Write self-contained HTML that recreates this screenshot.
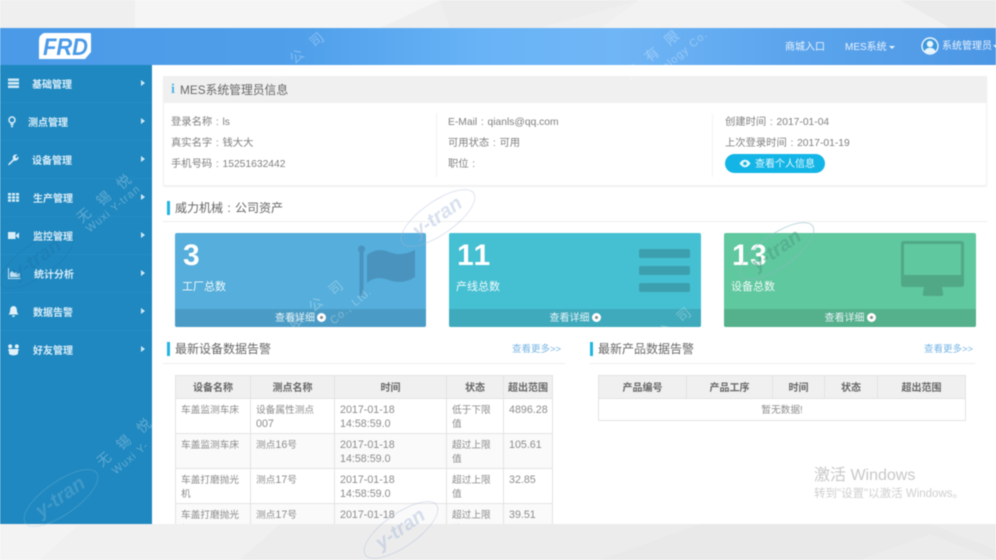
<!DOCTYPE html>
<html lang="zh">
<head>
<meta charset="utf-8">
<title>MES</title>
<style>
*{box-sizing:border-box;margin:0;padding:0}
html,body{width:996px;height:560px;overflow:hidden;background:#fff}
body{position:relative;font-family:"Liberation Sans","Noto Sans CJK SC",sans-serif;color:#777}
#wrap{position:absolute;left:0;top:0;width:996px;height:560px;overflow:hidden;filter:blur(.45px)}
.a{position:absolute;white-space:nowrap}
.nav{position:absolute;left:0;width:152px;height:38px;border-bottom:1px solid #258dc5}
.nav b{position:absolute;top:14px;font-weight:bold;font-size:10px;line-height:14px;color:#d9edf8}
.nav i{position:absolute;left:141px;top:15px;width:0;height:0;border-left:4px solid #cfe8f6;border-top:3.5px solid transparent;border-bottom:3.5px solid transparent}
.nav svg{position:absolute;left:7px;top:12px}
.t{font-size:10.3px;line-height:14px;color:#808080}
.c{display:inline-block;width:1em;text-align:center}
.bar{position:absolute;width:3px;height:14px;background:#1fb5e0}
.line{position:absolute;height:1px;background:#eceeef}
.sec{position:absolute;font-size:12px;line-height:16px;color:#666}
.more{position:absolute;font-size:9.5px;line-height:14px;color:#74b4e4}
.card{position:absolute;top:233px;height:94px;border-radius:2px;overflow:hidden}
.card .n{position:absolute;left:8px;top:3px;font-size:30px;line-height:40px;font-weight:bold;color:#fff;letter-spacing:1.5px}
.card .l{position:absolute;left:7px;top:47px;font-size:11px;line-height:14px;color:#f2fafc}
.card .f{position:absolute;left:0;right:0;bottom:0;height:18px;text-align:center;font-size:10px;line-height:20px;color:#e8f4f8}
.dot{display:inline-block;width:9px;height:9px;border-radius:50%;background:#fff;vertical-align:-1px;margin-left:2px;position:relative}
.dot:after{content:"";position:absolute;left:3px;top:3px;width:3px;height:3px;background:#888;border-radius:50%}
table{position:absolute;border-collapse:collapse;table-layout:fixed;font-size:9.7px;line-height:13.5px;color:#8c8c8c}
td,th{border:1px solid #e3e3e3;padding:5px 5px 0;vertical-align:top;text-align:left;font-weight:normal;overflow:hidden;white-space:nowrap}
th{background:#f0f0f0;color:#666;font-weight:bold;font-size:10px;text-align:center;padding:6px 3px 0;height:23px}
.d{font-size:10.7px}
.wm{position:absolute;white-space:nowrap;color:#fff;transform:rotate(-40deg);transform-origin:left top;opacity:.22}
.cn{font-size:14px;letter-spacing:12px}
.en{font-size:11px;letter-spacing:1px}
.oval{position:absolute;width:88px;height:34px;border:1px solid #a8b8d8;border-radius:50%;transform:rotate(-35deg);opacity:.4;text-align:center;font-style:italic;font-weight:bold;font-size:20px;line-height:30px;color:#9fb4d6}
</style>
</head>
<body>
<div id="wrap">

<svg class="a" style="left:0;top:0" width="996" height="28" viewBox="0 0 996 28">
<rect width="996" height="28" fill="#efefef"/>
<polygon points="135,0 440,0 380,28 135,28" fill="#f5f5f5"/>
<polygon points="440,0 640,0 540,28 450,28" fill="#ececec"/>
<polygon points="640,0 900,0 950,28 600,28" fill="#f2f2f2"/>
<polygon points="900,0 996,0 996,28 950,28" fill="#ebebeb"/>
</svg>
<svg class="a" style="left:0;top:524px" width="996" height="36" viewBox="0 0 996 36">
<rect width="996" height="36" fill="#ececec"/>
<polygon points="0,0 80,0 40,36 0,36" fill="#f3f3f3"/>
<polygon points="80,0 280,0 240,36 40,36" fill="#f0f0f0"/>
<polygon points="600,36 700,0 930,0 996,26 996,36" fill="#e9e9e9"/>
<polygon points="860,36 930,10 996,36" fill="#ececec"/>
</svg>

<!-- Header -->
<div class="a" style="left:0;top:28px;width:996px;height:37px;background:linear-gradient(90deg,#4a9ae8 0,#4f9fea 30%,#68b3f6 48%,#70b6f6 62%,#5da6ee 78%,#4c97e5 100%)"></div>
<svg class="a" style="left:38px;top:32px" width="54" height="28" viewBox="0 0 54 28">
<path d="M6 1H52Q53 1 53 3V20L47 27H1V8Q1 3 6 1Z" fill="#fff"/>
<text x="5" y="23" font-family="Liberation Sans,sans-serif" font-size="24" font-weight="bold" font-style="italic" fill="#4a9ae8" textLength="45" lengthAdjust="spacingAndGlyphs">FRD</text>
</svg>
<div class="a" style="left:785px;top:41px;font-size:10px;line-height:14px;color:#e8f3fd">商城入口</div>
<div class="a" style="left:845px;top:41px;font-size:10px;line-height:14px;color:#e8f3fd">MES系统</div>
<div class="a" style="left:889px;top:46px;border-top:3px solid #e8f3fd;border-left:3px solid transparent;border-right:3px solid transparent"></div>
<svg class="a" style="left:921px;top:37px" width="18" height="18" viewBox="0 0 18 18">
<circle cx="9" cy="9" r="8" fill="#3e98dc" stroke="#e8f6ff" stroke-width="1.4"/>
<circle cx="9" cy="7" r="3.2" fill="#e8f6ff"/>
<path d="M3.5 14.2Q5 10.8 9 10.8T14.5 14.2Q12 16.4 9 16.4T3.5 14.2Z" fill="#e8f6ff"/>
</svg>
<div class="a" style="left:942px;top:40px;font-size:10px;line-height:14px;color:#e8f3fd">系统管理员</div>
<div class="a" style="left:993px;top:45px;border-top:3px solid #e8f3fd;border-left:3px solid transparent;border-right:3px solid transparent"></div>

<!-- Sidebar -->
<div class="a" style="left:0;top:65px;width:152px;height:459px;background:#1f88c0"></div>
<div class="nav" style="top:65px"><svg width="13" height="13" viewBox="0 0 13 13" fill="#cfe8f6"><path d="M1 1.500h11v2.500H1zM1 5h11v2.500H1zM1 8.500h11v2.500H1z"/></svg><b style="left:32px">基础管理</b><i></i></div>
<div class="nav" style="top:103px"><svg width="13" height="13" viewBox="0 0 13 13" fill="none" stroke="#d8edf8" stroke-width="1.5"><circle cx="5" cy="5" r="3"/><path d="M3.500 9.500h3M4 11.500h2"/></svg><b style="left:28px">测点管理</b><i></i></div>
<div class="nav" style="top:141px"><svg width="13" height="13" viewBox="0 0 13 13" fill="#d8edf8"><path d="M1 11.200l5-5Q5 3 7.500 1.800 9 1.200 10.400 1.600L8.200 3.800 9.400 5.400l2-2q.6 2-.8 3.400-1.600 1.400-3.600.8l-5 4.800Z"/></svg><b style="left:32px">设备管理</b><i></i></div>
<div class="nav" style="top:179px"><svg width="13" height="13" viewBox="0 0 13 13" fill="#d8edf8"><path d="M1 2h3v2.400H1zM5 2h3v2.400H5zM9 2h3v2.400H9zM1 5.200h3v2.400H1zM5 5.200h3v2.400H5zM9 5.200h3v2.400H9zM1 8.400h3v2.400H1zM5 8.400h3v2.400H5zM9 8.400h3v2.400H9z"/></svg><b style="left:33px">生产管理</b><i></i></div>
<div class="nav" style="top:217px"><svg width="13" height="13" viewBox="0 0 13 13" fill="#d8edf8"><path d="M1 3h7.500v7H1zM9 6l3-2.600v6.200L9 7.200z"/></svg><b style="left:33px">监控管理</b><i></i></div>
<div class="nav" style="top:255px"><svg width="14" height="13" viewBox="0 0 14 13" fill="#bfe0f2"><path d="M1 1v11h13v-1H2V1zM3 10V6l2-2 2 2 2-1 2 2 2-1v4z"/></svg><b style="left:34px">统计分析</b><i></i></div>
<div class="nav" style="top:293px"><svg width="13" height="13" viewBox="0 0 13 13" fill="#e2f1f9"><path d="M6.500 1q3.400.4 3.400 4.400 0 2.600 1.600 4.100H1.500Q3.100 8 3.100 5.400 3.100 1.400 6.500 1ZM5 10.400h3Q7.600 12 6.500 12T5 10.400Z"/></svg><b style="left:33px">数据告警</b><i></i></div>
<div class="nav" style="top:331px;border:0"><svg width="13" height="13" viewBox="0 0 13 13" fill="#e2f1f9"><circle cx="3.200" cy="3.400" r="2"/><circle cx="9.800" cy="3.400" r="2"/><path d="M2 6h9l1 1-1 1.400V11q-2 1.400-4.500 1.400T2 11V8.400L1 7Z"/></svg><b style="left:33px">好友管理</b><i></i></div>

<!-- Info card -->
<div class="a" style="left:163px;top:76px;width:824px;height:110px;background:#fff;border:1px solid #f2f2f2;border-radius:2px;box-shadow:0 1px 1px #eee"></div>
<div class="a" style="left:163px;top:76px;width:824px;height:27px;background:#f0f0f0"></div>
<div class="a" style="left:171px;top:81px;font-size:14px;line-height:18px;font-weight:bold;font-family:'Liberation Serif',serif;color:#4fb4e6">i</div>
<div class="a" style="left:180px;top:82px;font-size:11.8px;line-height:16px;color:#666">MES系统管理员信息</div>
<div class="a" style="left:436px;top:113px;width:1px;height:64px;background:#f1f1f1"></div>
<div class="a" style="left:712px;top:113px;width:1px;height:64px;background:#f4f4f4"></div>
<div class="a t" style="left:171px;top:115px;margin-top:1px">登录名称<span class="c">:</span>ls</div>
<div class="a t" style="left:171px;top:137px">真实名字<span class="c">:</span>钱大大</div>
<div class="a t" style="left:171px;top:158px">手机号码<span class="c">:</span>15251632442</div>
<div class="a t" style="left:448px;top:116px">E-Mail<span class="c">:</span>qianls@qq.com</div>
<div class="a t" style="left:448px;top:137px">可用状态<span class="c">:</span>可用</div>
<div class="a t" style="left:448px;top:158px">职位<span class="c">:</span></div>
<div class="a t" style="left:725px;top:116px">创建时间<span class="c">:</span>2017-01-04</div>
<div class="a t" style="left:725px;top:137px">上次登录时间<span class="c">:</span>2017-01-19</div>
<div class="a" style="left:725px;top:154px;width:100px;height:19px;border-radius:10px;background:#13b5e6"></div>
<svg class="a" style="left:739px;top:159px" width="12" height="9" viewBox="0 0 12 9"><path d="M0.500 4.500Q3 .8 6 .8T11.500 4.500Q9 8.200 6 8.200T.5 4.500Z" fill="#e8f8fd"/><circle cx="6" cy="4.500" r="1.800" fill="#13b5e6"/></svg>
<div class="a" style="left:755px;top:158px;font-size:10px;line-height:14px;color:#e8f8fd">查看个人信息</div>

<!-- Section 1 -->
<div class="bar" style="left:167px;top:201px"></div>
<div class="sec" style="left:175px;top:200px">威力机械<span class="c">:</span>公司资产</div>
<div class="line" style="left:163px;top:221px;width:824px"></div>

<div class="card" style="left:175px;width:251px;background:#55aedb">
  <div class="n">3</div><div class="l">工厂总数</div>
  <svg class="a" style="left:183px;top:11px" width="60" height="56" viewBox="0 0 60 56" fill="#4a93bf"><circle cx="3.500" cy="5" r="3.500"/><rect x="1.500" y="6" width="4" height="46" rx="1"/><path d="M9 11Q19 3 31 8T57 6V33Q45 41 31 36T9 39Z"/></svg>
  <div class="f" style="background:#4a9cc6">查看详细<span class="dot"></span></div>
</div>
<div class="card" style="left:449px;width:252px;background:#45c0d2">
  <div class="n">11</div><div class="l">产线总数</div>
  <svg class="a" style="left:190px;top:16px" width="52" height="46" viewBox="0 0 52 46" fill="#3c9fae"><rect width="51" height="9" rx="2"/><rect y="17" width="51" height="9" rx="2"/><rect y="34" width="51" height="9" rx="2"/></svg>
  <div class="f" style="background:#3faabc">查看详细<span class="dot"></span></div>
</div>
<div class="card" style="left:724px;width:252px;background:#5fc89e">
  <div class="n">13</div><div class="l">设备总数</div>
  <svg class="a" style="left:177px;top:8px" width="64" height="58" viewBox="0 0 64 58"><path d="M3 0H60Q63 0 63 3V43Q63 46 60 46H3Q0 46 0 43V3Q0 0 3 0ZM3 3V34H60V3Z" fill="#50a887" fill-rule="evenodd"/><path d="M23 46H41L42 52Q43 55 40 55H24Q21 55 22 52Z" fill="#50a887"/></svg>
  <div class="f" style="background:#55b08c">查看详细<span class="dot"></span></div>
</div>

<!-- Section 2 -->
<div class="bar" style="left:167px;top:342px"></div>
<div class="sec" style="left:175px;top:341px">最新设备数据告警</div>
<div class="more" style="left:512px;top:343px">查看更多&gt;&gt;</div>
<div class="line" style="left:163px;top:363px;width:402px"></div>

<div class="bar" style="left:590px;top:342px"></div>
<div class="sec" style="left:598px;top:341px">最新产品数据告警</div>
<div class="more" style="left:924px;top:343px">查看更多&gt;&gt;</div>
<div class="line" style="left:590px;top:363px;width:385px"></div>

<!-- Table 1 -->
<div class="a" style="left:175px;top:375px;width:378px;height:149px;overflow:hidden">
<table style="left:0;top:0;width:377px">
<colgroup><col style="width:75px"><col style="width:84px"><col style="width:112px"><col style="width:57px"><col style="width:49px"></colgroup>
<tr><th>设备名称</th><th>测点名称</th><th>时间</th><th>状态</th><th>超出范围</th></tr>
<tr style="height:35px"><td>车盖监测车床</td><td>设备属性测点<br><span class="d">007</span></td><td class="d">2017-01-18<br>14:58:59.0</td><td>低于下限<br>值</td><td class="d">4896.28</td></tr>
<tr style="height:35px;background:#fafafa"><td>车盖监测车床</td><td>测点<span class="d">16</span>号</td><td class="d">2017-01-18<br>14:58:59.0</td><td>超过上限<br>值</td><td class="d">105.61</td></tr>
<tr style="height:35px"><td>车盖打磨抛光<br>机</td><td>测点<span class="d">17</span>号</td><td class="d">2017-01-18<br>14:58:59.0</td><td>超过上限<br>值</td><td class="d">32.85</td></tr>
<tr style="height:35px;background:#fafafa"><td>车盖打磨抛光<br>机</td><td>测点<span class="d">17</span>号</td><td class="d">2017-01-18<br>14:58:59.0</td><td>超过上限<br>值</td><td class="d">39.51</td></tr>
</table>
</div>

<!-- Table 2 -->
<table style="left:598px;top:375px;width:367px">
<colgroup><col style="width:88px"><col style="width:86px"><col style="width:52px"><col style="width:53px"><col style="width:88px"></colgroup>
<tr><th>产品编号</th><th>产品工序</th><th>时间</th><th>状态</th><th>超出范围</th></tr>
<tr style="height:22px"><td colspan="5" style="text-align:center;padding-top:5px">暂无数据!</td></tr>
</table>

<!-- Windows activation -->
<div class="a" style="left:814px;top:466px;font-size:16px;line-height:20px;color:#c8c8c8">激活 Windows</div>
<div class="a" style="left:814px;top:487px;font-size:11.5px;line-height:14px;color:#cfcfcf">转到"设置"以激活 Windows。</div>

<!-- Watermarks -->
<div class="wm cn" style="left:72px;top:212px;opacity:.28">无锡悦</div>
<div class="wm en" style="left:84px;top:226px;opacity:.28">Wuxi Y-tran</div>
<div class="wm cn" style="left:92px;top:456px;opacity:.28">无锡悦</div>
<div class="wm en" style="left:110px;top:468px;opacity:.28">Wuxi Y-</div>
<div class="wm cn" style="left:265px;top:70px;opacity:.3">限公司</div>
<div class="wm cn" style="left:620px;top:68px;opacity:.3">技有限</div>
<div class="wm en" style="left:660px;top:64px;opacity:.3">ology Co.</div>
<div class="wm cn" style="left:284px;top:318px;opacity:.3">限公司</div>
<div class="wm en" style="left:328px;top:318px;opacity:.3">Co., Ltd.</div>
<div class="wm cn" style="left:632px;top:345px;opacity:.28">限公司</div>
<div class="oval" style="left:394px;top:201px">y-tran</div>
<div class="oval" style="left:733px;top:234px;color:#4f9f88;border-color:#8cb8c4;opacity:.55">y-tran</div>
<div class="oval" style="left:17px;top:481px;opacity:.3;color:#8cc0dc;border-color:#8cc0dc">y-tran</div>
<div class="oval" style="left:357px;top:513px">y-tran</div>
<div class="oval" style="left:-7px;top:243px;opacity:.3;color:#1a70a4;border-color:#1a70a4">y-tran</div>

</div>
</body>
</html>
